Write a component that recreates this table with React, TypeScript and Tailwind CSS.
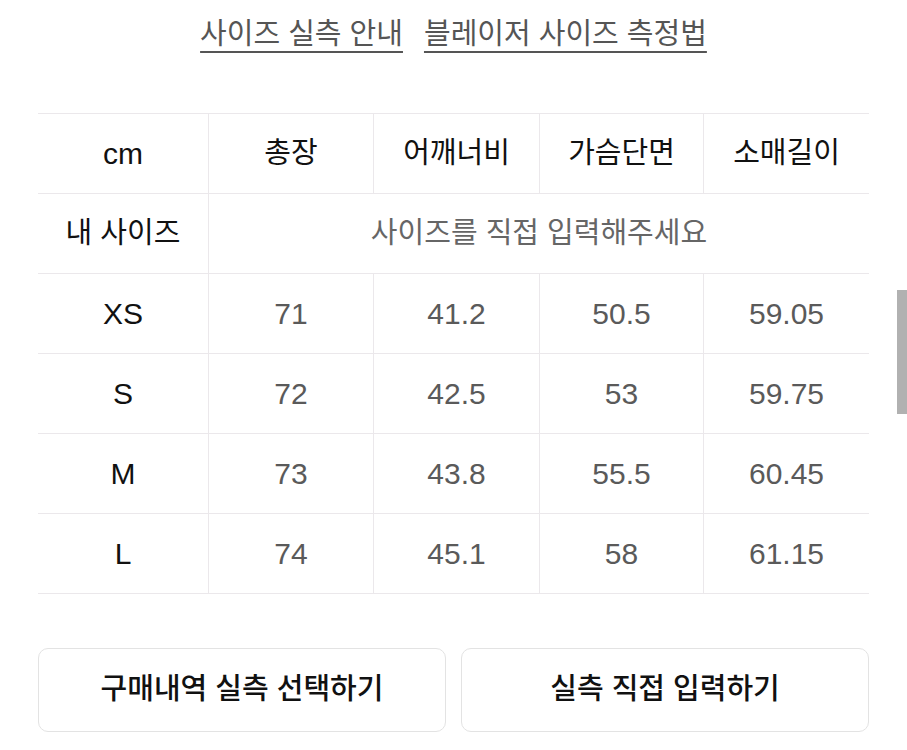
const font = { fontFamily: '"Liberation Sans", "Noto Sans CJK KR", sans-serif' };

const headers = ["총장", "어깨너비", "가슴단면", "소매길이"];

const rows = [
  { size: "XS", values: ["71", "41.2", "50.5", "59.05"] },
  { size: "S", values: ["72", "42.5", "53", "59.75"] },
  { size: "M", values: ["73", "43.8", "55.5", "60.45"] },
  { size: "L", values: ["74", "45.1", "58", "61.15"] },
];

const cell = "flex h-[80px] items-center justify-center border-b border-[#ebe8eb]";

export default function App() {
  return (
    <div className="relative w-[907px] h-[750px] overflow-hidden bg-white" style={font}>
      <div className="flex justify-center gap-[21px] pt-[12px] text-[29px] leading-[44px] text-[#555555]">
        <span className="underline decoration-[2px] underline-offset-[7px]">사이즈 실측 안내</span>
        <span className="underline decoration-[2px] underline-offset-[7px]">블레이저 사이즈 측정법</span>
      </div>

      <div className="mx-[38px] mt-[57px] w-[831px]">
        <div className="grid grid-cols-[171px_165px_166px_164px_165px] border-t border-[#ebe8eb]">
          <div className={`${cell} border-r text-[30px] text-[#111111]`}>cm</div>
          {headers.map((h, i) => (
            <div key={h} className={`${cell} text-[29px] text-[#111111] ${i < 3 ? "border-r" : ""}`}>
              {h}
            </div>
          ))}

          <div className={`${cell} border-r text-[29px] text-[#111111]`}>내 사이즈</div>
          <div className={`${cell} col-span-4 text-[29px] text-[#666666]`}>사이즈를 직접 입력해주세요</div>

          {rows.map((r) => (
            <div key={r.size} className="contents">
              <div className={`${cell} border-r text-[30px] text-[#111111]`}>{r.size}</div>
              {r.values.map((v, i) => (
                <div key={i} className={`${cell} text-[30px] text-[#5a5a5a] ${i < 3 ? "border-r" : ""}`}>
                  {v}
                </div>
              ))}
            </div>
          ))}
        </div>
      </div>

      <div className="mx-[38px] mt-[54px] flex w-[831px] gap-[15px]">
        <button className="flex h-[84px] flex-1 items-center justify-center rounded-[10px] border border-[#e3e3e3] text-[29px] font-medium text-[#111111]">
          구매내역 실측 선택하기
        </button>
        <button className="flex h-[84px] flex-1 items-center justify-center rounded-[10px] border border-[#e3e3e3] text-[29px] font-medium text-[#111111]">
          실측 직접 입력하기
        </button>
      </div>

      <div className="absolute right-0 top-[290px] h-[124px] w-[10px] bg-[#b1b1b1]" />
    </div>
  );
}
